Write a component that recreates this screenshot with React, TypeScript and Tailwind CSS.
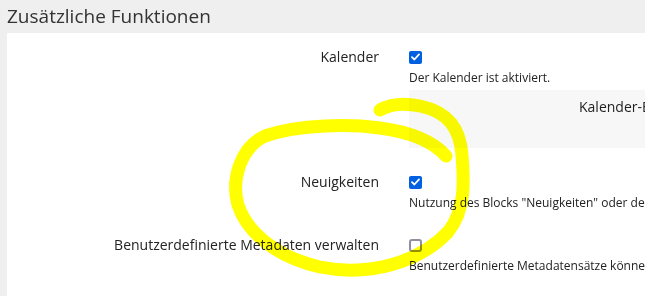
import React from "react";

function Check({ checked }: { checked: boolean }) {
  if (checked) {
    return (
      <span className="flex h-[13px] w-[13px] items-center justify-center rounded-[2px] bg-[#0060df]">
        <svg width="9" height="8" viewBox="0 0 9 8" fill="none">
          <path d="M1 4.2 L3.4 6.5 L8 1.4" stroke="white" strokeWidth="1.8" strokeLinecap="round" strokeLinejoin="round" />
        </svg>
      </span>
    );
  }
  return <span className="block h-[13px] w-[13px] rounded-[3px] border-2 border-[#8f8f9d] bg-white" />;
}

function Row({
  label,
  checked,
  desc,
  children,
  className,
}: {
  label: string;
  checked: boolean;
  desc: string;
  children?: React.ReactNode;
  className?: string;
}) {
  return (
    <div className={"flex " + (className ?? "")}>
      <div className="w-[372px] shrink-0 text-right text-[14px] leading-[20px] text-[#222]">{label}</div>
      <div className="ml-[30px] flex min-w-0 flex-1 flex-col overflow-hidden">
        <div className="flex h-[20px] items-center">
          <Check checked={checked} />
        </div>
        <div className="mt-[3px] whitespace-nowrap text-[12px] leading-[16px] text-[#222]">{desc}</div>
        {children}
      </div>
    </div>
  );
}

export default function App() {
  return (
    <div
      className="relative flex h-[296px] w-full flex-col overflow-hidden bg-[#efefef]"
      style={{ fontFamily: '"Open Sans", "Noto Sans", sans-serif' }}
    >
      <h2 className="h-[33px] shrink-0 pl-[7px] text-[19px] leading-[33px] text-[#333]">Zusätzliche Funktionen</h2>
      <div className="ml-[7px] flex-1 overflow-hidden bg-white pt-[14px]">
        <Row label="Kalender" checked desc="Der Kalender ist aktiviert.">
          <div className="mt-[4px] h-[58px] whitespace-nowrap bg-[#f7f7f7] pl-[170px] pt-[7px] text-[14px] leading-[20px] text-[#222]">
            Kalender-Einstellungen
          </div>
        </Row>
        <Row
          className="mt-[24px]"
          label="Neuigkeiten"
          checked
          desc={'Nutzung des Blocks "Neuigkeiten" oder der Neuigkeiten-Seite aktivieren.'}
        />
        <Row
          className="mt-[24px]"
          label="Benutzerdefinierte Metadaten verwalten"
          checked={false}
          desc="Benutzerdefinierte Metadatensätze können für dieses Objekt angelegt werden."
        />
      </div>
      <svg
        className="pointer-events-none absolute left-0 top-0 mix-blend-multiply"
        width="645"
        height="296"
        viewBox="0 0 645 296"
      >
        <path
          d="M446 156 C432 140 410 132 380 128 C350 124 300 124 265 136 C240 148 231 180 238 205 C248 235 280 258 320 267 C370 277 420 262 448 232 C466 210 464 180 462 155 C460 128 448 112 420 106 C405 103 390 104 380 110"
          fill="none"
          stroke="#ffff00"
          strokeWidth="13"
          strokeLinecap="round"
          strokeLinejoin="round"
        />
      </svg>
    </div>
  );
}
